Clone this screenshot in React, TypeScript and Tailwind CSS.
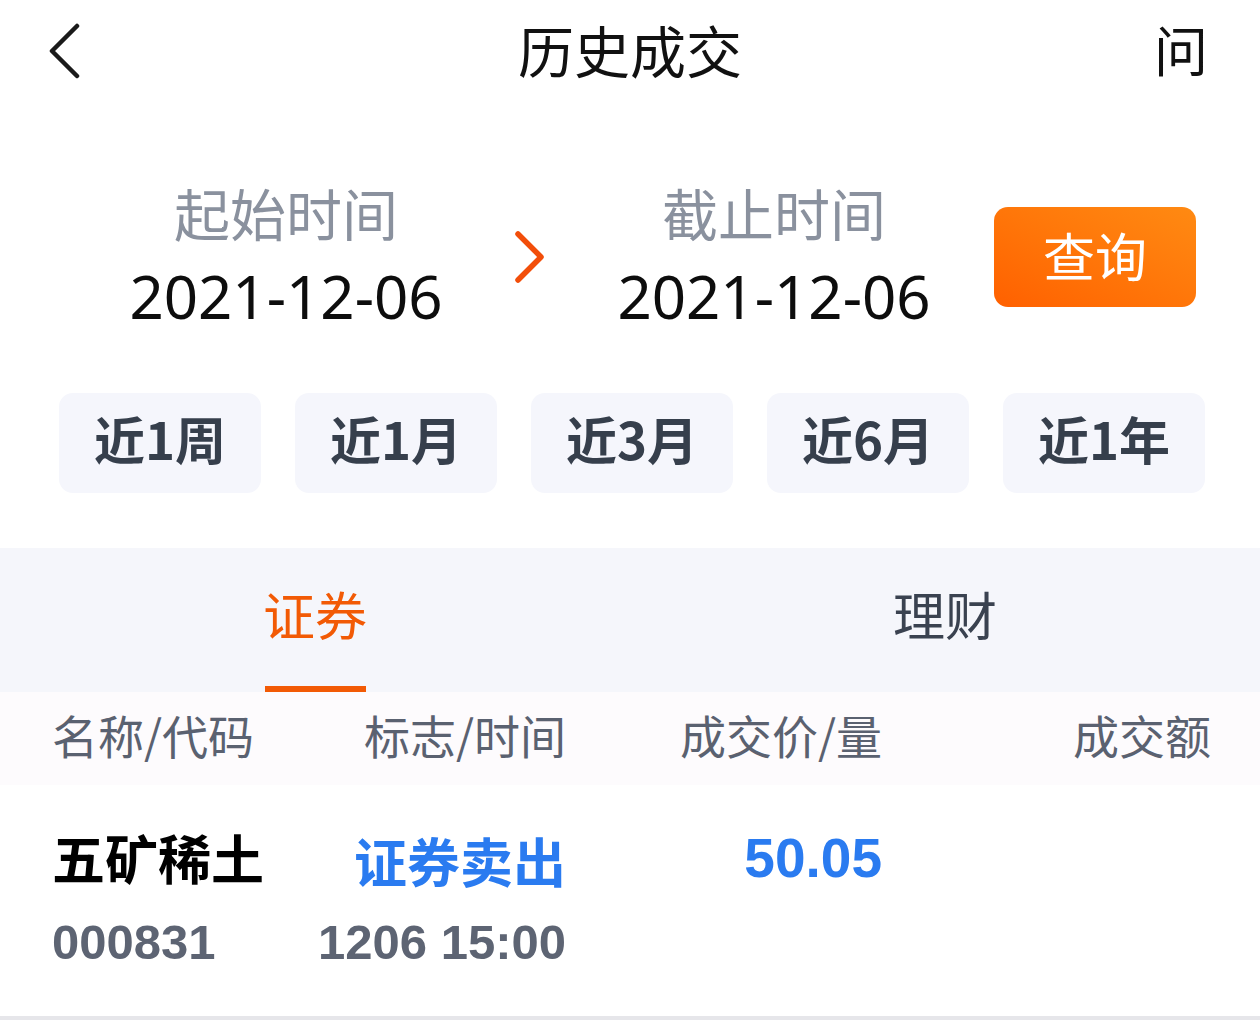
import React from "react";

const cjk = { fontFamily: '"Noto Sans CJK SC", "Noto Sans", sans-serif' };
const num = { fontFamily: '"Liberation Sans", "Noto Sans CJK SC", sans-serif' };
const sans = { fontFamily: '"Noto Sans", sans-serif' };

function DateCol({ label }: { label: string }) {
  return (
    <div className="w-[440px] flex flex-col items-center gap-[25px]">
      <div className="text-[56px] leading-[50px] mb-[6px] text-[#8a919e]">{label}</div>
      <div className="text-[60px] leading-[56px] mb-[2px] text-[#0d0d0d]" style={sans}>2021-12-06</div>
    </div>
  );
}

export default function App() {
  const quick = ["近1周", "近1月", "近3月", "近6月", "近1年"];
  return (
    <div className="w-[1260px] h-[1026px] bg-white overflow-hidden" style={cjk}>
      {/* Header */}
      <div className="h-[104px] px-[48px] grid grid-cols-[1fr_auto_1fr] items-center">
        <div className="flex items-center pb-[2px]">
          <svg width="36" height="56" viewBox="0 0 36 56">
            <path d="M29 3 L4 28 L29 53" fill="none" stroke="#1a1a1a" strokeWidth="4.5" strokeLinecap="round" strokeLinejoin="round" />
          </svg>
        </div>
        <div className="text-[56px] leading-[50px] pb-[6px] text-[#111]">历史成交</div>
        <div className="flex justify-end pr-[4px] pb-[6px] text-[54px] leading-[50px] text-[#111]">问</div>
      </div>

      {/* Date section */}
      <div className="mt-[83px] flex items-center pl-[66px]">
        <DateCol label="起始时间" />
        <div className="w-[48px] flex justify-center">
          <svg width="34" height="54" viewBox="0 0 34 54">
            <path d="M5 4 L28 27 L5 50" fill="none" stroke="#f24e0a" strokeWidth="5.5" strokeLinecap="round" strokeLinejoin="round" />
          </svg>
        </div>
        <DateCol label="截止时间" />
        <div className="w-[202px] h-[100px] pb-[4px] rounded-[14px] bg-gradient-to-tr from-[#ff6000] to-[#ff8a12] flex items-center justify-center">
          <span className="text-[52px] leading-[52px] text-white">查询</span>
        </div>
      </div>

      {/* Quick buttons */}
      <div className="mt-[67px] pl-[59px] flex gap-[34px]">
        {quick.map((q) => (
          <div key={q} className="w-[202px] h-[100px] pb-[10px] rounded-[14px] bg-[#f5f6fc] flex items-center justify-center">
            <span className="text-[51px] leading-[52px] font-bold text-[#363f4c]">{q}</span>
          </div>
        ))}
      </div>

      {/* Tabs */}
      <div className="mt-[55px] h-[144px] bg-[#f5f6fb] grid grid-cols-2">
        <div className="flex flex-col items-center">
          <div className="flex-1 flex items-center pb-[6px]">
            <span className="text-[52px] leading-[52px] text-[#f25a05]">证券</span>
          </div>
          <div className="w-[101px] h-[6px] bg-[#f25a05]" />
        </div>
        <div className="flex flex-col items-center">
          <div className="flex-1 flex items-center pb-[6px]">
            <span className="text-[52px] leading-[52px] text-[#3a4250]">理财</span>
          </div>
          <div className="h-[6px]" />
        </div>
      </div>

      {/* Column header */}
      <div className="h-[93px] pb-[10px] bg-[#fdfbfd] flex items-center text-[46px] leading-[48px] text-[#5a6170]">
        <div className="w-[310px] pl-[52px]">名称/代码</div>
        <div className="w-[256px] text-right">标志/时间</div>
        <div className="w-[316px] text-right">成交价/量</div>
        <div className="w-[329px] text-right">成交额</div>
      </div>

      {/* Data row */}
      <div className="h-[231px] pt-[47px] flex flex-col gap-[28px]">
        <div className="flex items-center h-[56px]">
          <div className="w-[310px] pl-[52px] pb-[6px] text-[53px] leading-[50px] font-bold text-black">五矿稀土</div>
          <div className="w-[256px] text-right text-[53px] leading-[56px] font-bold text-[#2a7bf0]">证券卖出</div>
          <div className="w-[316px] pb-[4px] text-right text-[55px] leading-[52px] font-bold text-[#2a7bf0]" style={num}>50.05</div>
        </div>
        <div className="flex items-center h-[52px]">
          <div className="w-[310px] pl-[52px] text-[49px] leading-[52px] font-bold text-[#5d6473]" style={num}>000831</div>
          <div className="w-[256px] text-right text-[49px] leading-[52px] font-bold text-[#5d6473]" style={num}>1206 15:00</div>
        </div>
      </div>
      <div className="h-[4px] bg-[#e6e6ea]" />
    </div>
  );
}
